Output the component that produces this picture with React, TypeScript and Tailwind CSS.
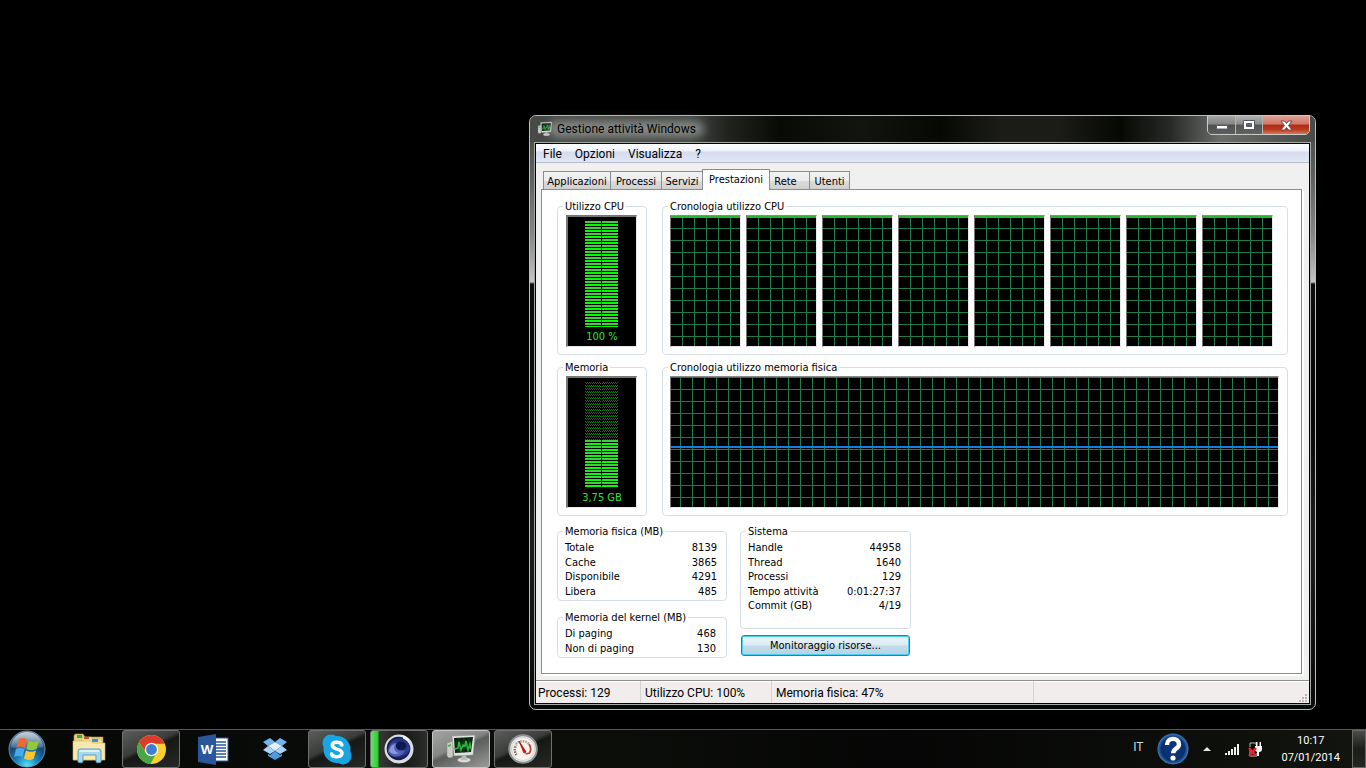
import { ReactNode, useId } from "react";

const dialogFont = "font-['DejaVu_Sans_Condensed','DejaVu_Sans',sans-serif] text-[11px] leading-[13px]";
const shellFont = "font-[Roboto,'Open_Sans',sans-serif] text-xs leading-4";

const tabs = [
  { name: "Applicazioni", width: "w-[68px]" },
  { name: "Processi", width: "w-[52px]" },
  { name: "Servizi", width: "w-[42px]" },
  { name: "Prestazioni", width: "w-[68px]" },
  { name: "Rete", width: "w-[41px]" },
  { name: "Utenti", width: "w-[41px]" },
];

const physicalMemory = [
  ["Totale", "8139"],
  ["Cache", "3865"],
  ["Disponibile", "4291"],
  ["Libera", "485"],
];

const kernelMemory = [
  ["Di paging", "468"],
  ["Non di paging", "130"],
];

const system = [
  ["Handle", "44958"],
  ["Thread", "1640"],
  ["Processi", "129"],
  ["Tempo attività", "0:01:27:37"],
  ["Commit (GB)", "4/19"],
];

function Group({ title, className = "", children }: { title: string; className?: string; children: ReactNode }) {
  return (
    <fieldset className={`min-w-0 rounded-[4px] border border-[#d5dfe5] pl-[7px] ${className}`}>
      <legend className="-ml-[2px] px-[2px] leading-[13px]">{title}</legend>
      {children}
    </fieldset>
  );
}

function Stats({ rows }: { rows: string[][] }) {
  return (
    <table className="w-full">
      <tbody>
        {rows.map(([label, value]) => (
          <tr key={label} className="odd:h-[15px] even:h-[14px]">
            <th scope="row" className="p-0 text-left font-normal">{label}</th>
            <td className="p-0 text-right">{value}</td>
          </tr>
        ))}
      </tbody>
    </table>
  );
}

function Meter({ used, label }: { used: number; label: string }) {
  const id = useId();
  const top = 106 - used;
  return (
    <div className="flex h-[132px] w-[71px] flex-col items-center border-t-2 border-r border-b border-l-2 border-t-[#777] border-r-[#e8e8e8] border-b-[#e8e8e8] border-l-[#777] bg-black pt-1 text-[#2fe02f]">
      <svg width="34" height="106" shapeRendering="crispEdges" aria-hidden="true">
        <defs>
          <pattern id={`${id}-on`} width="17" height="6" y={top} patternUnits="userSpaceOnUse">
            <rect width="16" height="2" fill="#43cb43" />
            <rect y="3" width="16" height="2" fill="#05fb05" />
          </pattern>
          <pattern id={`${id}-off`} width="2" height="3" patternUnits="userSpaceOnUse">
            <rect width="1" height="1" fill="#0a7a0a" />
            <rect x="1" y="1" width="1" height="1" fill="#0a7a0a" />
          </pattern>
        </defs>
        <rect width="33" height={top} fill={`url(#${id}-off)`} />
        <rect y={top} width="33" height={used} fill={`url(#${id}-on)`} />
        <rect x="16" width="1" height="106" fill="#000" />
      </svg>
      <span className="mt-[3px]">{label}</span>
    </div>
  );
}

function History({ offset, children }: { offset: number; children: ReactNode }) {
  const id = useId();
  return (
    <div className="h-[132px] min-w-0 flex-1 border border-t-[#8a8a8a] border-r-[#e8e8e8] border-b-[#e8e8e8] border-l-[#777] bg-black">
      <svg className="block h-full w-full" shapeRendering="crispEdges" aria-hidden="true">
        <defs>
          <pattern id={id} x={offset} y="12" width="12" height="12" patternUnits="userSpaceOnUse">
            <path d="M0 0h12v1H1v11H0z" fill="#1f7a4c" />
          </pattern>
        </defs>
        <rect width="100%" height="100%" fill={`url(#${id})`} />
        {children}
      </svg>
    </div>
  );
}

function MonitorIcon({ className }: { className: string }) {
  return (
    <svg viewBox="0 0 32 28" className={className} aria-hidden="true">
      <path d="M2 8l6-2v16l-4 1-2-2z" fill="#c9ccc9" stroke="#8c908c" strokeWidth=".6" />
      <path d="M3 10l3-1v2l-3 1z" fill="#59b43c" />
      <ellipse cx="19" cy="25" rx="6.500" ry="2.500" fill="#d8dad8" />
      <path d="M17 20h4l1 5h-6z" fill="#b9bcb9" />
      <path d="M7 1l23-1-2 20-19 1z" fill="#e2e4e2" stroke="#8f938f" strokeWidth=".6" />
      <path d="M9 3l19-1-2 15-16 1z" fill="#0a2410" />
      <path d="M9 8h18M9 13h17M14 3v15M19 3v15M24 3v14" stroke="#14592a" strokeWidth=".6" />
      <path d="M10 14l3-1 1-6 2 8 2-5 2 1 1-5 2 9 2-6 1 5" fill="none" stroke="#2fb53d" strokeWidth="1.600" />
    </svg>
  );
}

function WindowButtons() {
  return (
    <div className="-mt-px flex h-5 shrink-0 overflow-hidden rounded-b-[5px] border border-[#c9cbc9] bg-[#777]">
      <button aria-label="Riduci a icona" className="flex w-7 items-center justify-center border-r border-[#b5b5b5] bg-[linear-gradient(#a3a3a3,#858585_45%,#4f5151_50%,#5c5e5e)]">
        <svg width="12" height="6" className="mt-1">
          <rect x=".5" y="1.500" width="11" height="3.500" rx=".5" fill="#fff" stroke="#555b66" />
        </svg>
      </button>
      <button aria-label="Ingrandisci" className="flex w-[27px] items-center justify-center border-r border-[#b5b5b5] bg-[linear-gradient(#b0b0b0,#8c8c8c_45%,#525454_50%,#626464)]">
        <svg width="12" height="10">
          <path d="M.5.500h11v9H.500zM3.500 3.500v3h5v-3z" fill="#fff" fillRule="evenodd" stroke="#555b66" />
        </svg>
      </button>
      <button aria-label="Chiudi" className="flex w-[46px] items-center justify-center bg-[linear-gradient(#dfa195,#cf7768_45%,#b32a14_50%,#b83a20_75%,#d9775a)]">
        <svg width="13" height="11">
          <path d="M1 1h3.500l2 2.500 2-2.500H12L8.500 5.500 12 10H8.500l-2-2.500-2 2.500H1l3.500-4.500z" fill="#fff" stroke="#5a4a55" strokeWidth=".9" />
        </svg>
      </button>
    </div>
  );
}

function TaskManager() {
  return (
    <section
      aria-label="Gestione attività Windows"
      className="absolute top-[115px] right-[50px] left-[529px] rounded-[7px] border border-[#b9bdb9] bg-[linear-gradient(#454845,#5c605c_60px,#858885_120px,#c4c4c4_166px,#0c0e0c_168px,#060806_300px,#1c1e1c_420px,#080a08)] px-1 pb-1"
    >
      <div className="-mx-1 flex h-[26px] justify-between rounded-t-[6px] bg-[linear-gradient(90deg,#474a47,#3e413e_160px,#20221e_200px,#080a06_250px,#121410_330px,#060804_410px,#1b1c18_470px,#1b1c18_530px,#060804_590px,#272926_640px,#6a6c6a_690px,#484b48)] pr-[5px] pl-[7px]">
        <div className="flex items-center">
          <MonitorIcon className="h-4 w-4" />
          <h1 className={`${shellFont} relative ml-1 text-black`}>
            <span className="absolute -inset-x-2 inset-y-0 rounded-full bg-[#999c99]/80 blur-[5px]" />
            <span className="relative">Gestione attività Windows</span>
          </h1>
        </div>
        <WindowButtons />
      </div>

      <div className="border border-[#a4a8a4]">
        <div className="border border-black bg-[#f0f0f0]">
          <nav className={`${shellFont} flex h-[19px] items-center gap-[13px] border-b border-[#b6bccc] bg-[linear-gradient(#fff,#eef1f9_7px,#d5dcee_8px,#e2e7f6)] pt-px pl-[7px] text-black`}>
            <button>File</button>
            <button>Opzioni</button>
            <button>Visualizza</button>
            <button>?</button>
          </nav>

          <div className={`${dialogFont} px-[5px] pt-[6px] pb-[6px] text-black`}>
            <div role="tablist" className="relative flex h-5 items-end pl-[2px]">
              {tabs.map((tab) =>
                tab.name === "Prestazioni" ? (
                  <button key={tab.name} role="tab" aria-selected="true" className={`${tab.width} relative -mb-px -ml-px h-[21px] border border-b-0 border-[#898c95] bg-white pb-[2px]`}>
                    {tab.name}
                  </button>
                ) : (
                  <button key={tab.name} role="tab" aria-selected="false" className={`${tab.width} -ml-px h-[18px] border border-b-0 border-[#898c95] bg-[linear-gradient(#f3f3f3,#ebebeb_50%,#dcdcdc_52%,#d0d0d0)] pt-[2px] first:ml-0 ${tab.name === "Rete" ? "pr-2" : ""}`}>
                    {tab.name}
                  </button>
                )
              )}
            </div>

            <div className="mr-[2px] border border-[#898c95] bg-white px-[15px] pt-[10px] pb-[15px] shadow-[2px_2px_0_#fff]">
              <div className="mr-[-2px] flex gap-[15px]">
                <Group title="Utilizzo CPU" className="w-[90px] shrink-0 pt-[2px] pb-[7px]">
                  <div className="ml-px"><Meter used={106} label="100 %" /></div>
                </Group>
                <Group title="Cronologia utilizzo CPU" className="flex-1 pt-[2px] pr-[14px] pb-[7px]">
                  <div className="flex gap-[5px]">
                    {[0, 1, 2, 3, 4, 5, 6, 7].map((core) => (
                      <History key={core} offset={11}>
                        <rect width="100%" height="2" fill="#27b52c" />
                      </History>
                    ))}
                  </div>
                </Group>
              </div>

              <div className="mt-[6px] mr-[-2px] flex gap-[15px]">
                <Group title="Memoria" className="w-[90px] shrink-0 pt-[2px] pb-[7px]">
                  <div className="ml-px"><Meter used={48} label="3,75 GB" /></div>
                </Group>
                <Group title="Cronologia utilizzo memoria fisica" className="flex-1 pt-[2px] pr-2 pb-[7px]">
                  <div className="flex">
                    <History offset={9}>
                      <rect y="69" width="100%" height="2" fill="#107fe4" />
                    </History>
                  </div>
                </Group>
              </div>

              <div className="mt-[9px] flex gap-[13px]">
                <div className="flex w-[170px] flex-col gap-[10px]">
                  <Group title="Memoria fisica (MB)" className="pt-[2px] pr-[9px] pb-[2px]">
                    <Stats rows={physicalMemory} />
                  </Group>
                  <Group title="Memoria del kernel (MB)" className="pt-[2px] pr-[10px] pb-[2px]">
                    <Stats rows={kernelMemory} />
                  </Group>
                </div>
                <div className="flex w-[171px] flex-col gap-[6px]">
                  <Group title="Sistema" className="pt-[2px] pr-[9px] pb-[15px]">
                    <Stats rows={system} />
                  </Group>
                  <button className="mx-px h-[21px] rounded-[3px] border border-[#2c7da8] bg-[linear-gradient(#e9f3f9,#dcebf4_48%,#c3dcea_52%,#b5d3e4)] shadow-[inset_0_0_0_1px_#48d1f5]">
                    Monitoraggio risorse...
                  </button>
                </div>
              </div>
            </div>
          </div>

          <footer className={`${shellFont} relative flex h-[23px] items-center border-t border-[#8d8f8d] bg-[#f0edec] text-black shadow-[inset_0_1px_0_#fff]`}>
            <span className="w-[105px] self-stretch border-r border-[#d5d3d2] pt-1 pl-[2px]">Processi: 129</span>
            <span className="w-[131px] self-stretch border-r border-[#d5d3d2] pt-1 pl-1">Utilizzo CPU: 100%</span>
            <span className="w-[262px] self-stretch border-r border-[#d5d3d2] pt-1 pl-1">Memoria fisica: 47%</span>
            <svg width="10" height="10" className="mt-auto mr-px ml-auto" shapeRendering="crispEdges" aria-hidden="true">
              <path d="M7 1h2v2H7zM7 4h2v2H7zM4 4h2v2H4zM7 7h2v2H7zM4 7h2v2H4zM1 7h2v2H1z" fill="#bab7b6" />
            </svg>
          </footer>
        </div>
      </div>
    </section>
  );
}

function StartOrb() {
  return (
    <svg width="38" height="38" viewBox="0 0 38 38" aria-hidden="true">
      <defs>
        <radialGradient id="orb" cx=".5" cy=".95" r=".85">
          <stop offset="0" stopColor="#4fe3ff" />
          <stop offset=".35" stopColor="#1a86bd" />
          <stop offset=".7" stopColor="#174a78" />
          <stop offset="1" stopColor="#41668c" />
        </radialGradient>
        <linearGradient id="orb-shine" x2="0" y2="1">
          <stop offset="0" stopColor="#fff" stopOpacity=".7" />
          <stop offset="1" stopColor="#fff" stopOpacity=".12" />
        </linearGradient>
      </defs>
      <circle cx="19" cy="19" r="18" fill="url(#orb)" stroke="#7fa0bb" strokeWidth=".8" />
      <path d="M3 17a16 15 0 0132 0q-16 5-32 0z" fill="url(#orb-shine)" />
      <path d="M11 9q4-2 8 .5l-2 8.500q-4-2.500-8.500-.5z" fill="#ef6a2c" />
      <path d="M20.500 10.500q5 3 10.500 0l-2.500 8.500q-5 2.500-10 0z" fill="#93c83e" />
      <path d="M8 19q4-2 8.500.3l-2 8.200q-4-2.500-8.500-.5z" fill="#4aa7e8" />
      <path d="M18 20.500q5 2.500 10 0l-2.300 8.300q-5 2.500-9.700-.3z" fill="#fdc62f" />
    </svg>
  );
}

function ExplorerIcon() {
  return (
    <svg width="34" height="32" viewBox="0 0 34 32" aria-hidden="true">
      <path d="M2 3q0-2 2-2h7l2 3h18v23H2z" fill="#e9cf7f" stroke="#b49144" strokeWidth=".6" />
      <path d="M5 2h5v3H5z" fill="#34a846" />
      <path d="M10 6V4h9l2 2h9v20H10z" fill="#f3df9a" stroke="#c4a555" strokeWidth=".5" />
      <path d="M12 4h5v2h-5z" fill="#d94b31" />
      <path d="M20 6h6v3h-6z" fill="#3992d1" />
      <path d="M1 8h18l2 2h12v17H1z" fill="#f8e9ae" stroke="#cfae5e" strokeWidth=".6" />
      <path d="M6 18q0-2 2-2h19q2 0 2 2v11q-5 2-5-1v-6H11v6q0 3-5 1z" fill="#a9d8ee" stroke="#5aa1c9" />
      <path d="M7 18h20" stroke="#ecf9ff" strokeWidth="1.500" />
    </svg>
  );
}

function ChromeIcon() {
  return (
    <svg width="29" height="29" viewBox="0 0 28 28" aria-hidden="true">
      <circle cx="14" cy="14" r="14" fill="#fbd02f" />
      <path d="M1.900 7A14 14 0 0126.100 7L27 8.500H14L8 16z" fill="#dc3a2c" />
      <path d="M1.900 7A14 14 0 0013 28l6-11-5 3-6-4z" fill="#48a548" />
      <circle cx="14" cy="14" r="6.500" fill="#f3f5f3" />
      <circle cx="14" cy="14" r="5.200" fill="#3f7fd0" />
    </svg>
  );
}

function WordIcon() {
  return (
    <svg width="31" height="31" viewBox="0 0 31 31" aria-hidden="true">
      <rect x="16" y="4" width="14" height="23" fill="#fff" stroke="#2b579a" />
      <path d="M18 8h10M18 11h10M18 14h10M18 17h10M18 20h10M18 23h10" stroke="#2b579a" strokeWidth="1.300" />
      <path d="M0 3l18-3v31L0 28z" fill="#2a569c" />
      <text x="9" y="20" textAnchor="middle" fontSize="13" fontWeight="700" fill="#fff" fontFamily="Open Sans, sans-serif">W</text>
    </svg>
  );
}

function DropboxIcon() {
  return (
    <svg width="24" height="22" viewBox="0 0 24 22" aria-hidden="true">
      <path d="M7 0l5 4-7 4-5-4zM17 0l-5 4 7 4 5-4z" fill="#6fb5ee" />
      <path d="M5 8l7-4 7 4-7 5z" fill="#e0f1fd" />
      <path d="M0 12l5-4 7 5-5 3zM24 12l-5-4-7 5 5 3z" fill="#a8d5f7" />
      <path d="M5 16l2 1 5-4 5 4 2-1v2l-7 4-7-4z" fill="#4c9be0" />
    </svg>
  );
}

function SkypeIcon() {
  return (
    <svg width="30" height="31" viewBox="0 0 30 31" aria-hidden="true">
      <circle cx="9" cy="9" r="8.500" fill="#18a5e2" />
      <circle cx="21" cy="22" r="8.500" fill="#18a5e2" />
      <circle cx="15" cy="15.500" r="13.500" fill="#18a5e2" />
      <path d="M19.800 11c-1-3.800-9.500-3.600-9.500.3 0 4.800 9.700 2.800 9.700 8 0 4.500-9.500 4.500-10.500.7" fill="none" stroke="#fff" strokeWidth="3.600" strokeLinecap="round" />
    </svg>
  );
}

function CinemaIcon() {
  return (
    <svg width="30" height="30" viewBox="0 0 30 30" aria-hidden="true">
      <defs>
        <radialGradient id="lens" cx=".6" cy=".35" r=".8">
          <stop offset="0" stopColor="#101b5c" />
          <stop offset=".5" stopColor="#2b3f9b" />
          <stop offset="1" stopColor="#0b0e2b" />
        </radialGradient>
      </defs>
      <circle cx="15" cy="15" r="14.500" fill="#d9dce4" />
      <circle cx="14.500" cy="14.500" r="11.800" fill="#181d48" />
      <path d="M3 17C4 8 12 2 21 5c5 4 6 10 3 14-4 7-18 8-21-2z" fill="url(#lens)" />
      <path d="M4 18c0-5 4-10 9-9-3 5 1 9 8 7-2 8-14 9-17 2z" fill="#5b6cc4" opacity=".8" />
      <path d="M5 17c1-4 3-6 6-7-2 5 0 8 4 9-4 2-8 1-10-2z" fill="#b3bdf0" opacity=".6" />
      <ellipse cx="17" cy="12" rx="5" ry="4" fill="#10174a" />
      <path d="M19 1.500q4 1 6 4l1 6q-2-5-7-7z" fill="#f4f5f9" />
    </svg>
  );
}

function GaugeIcon() {
  return (
    <svg width="30" height="30" viewBox="0 0 30 30" aria-hidden="true">
      <circle cx="15" cy="15" r="13.800" fill="#eeebe6" stroke="#8e9296" strokeWidth="2" />
      <circle cx="15" cy="15" r="11.500" fill="#f7f4ee" stroke="#d4d2ce" />
      <path d="M8.500 21a9 9 0 01-.5-10" fill="none" stroke="#77736e" strokeWidth="2.500" strokeDasharray="1.500 1" />
      <path d="M8 10a9 9 0 0113 0" fill="none" stroke="#a39d96" strokeWidth="2.500" strokeDasharray="1.500 1" />
      <path d="M21 10q3 5 .5 9l-4 1" fill="none" stroke="#c53c35" strokeWidth="1.800" />
      <path d="M11 7l7 11-2 1z" fill="#b91b16" stroke="#b91b16" />
    </svg>
  );
}

const idle = "border-transparent";
const running = "border-[#6f716f] bg-[linear-gradient(155deg,#5b5d5b,#3b3d3b_42%,#161816_50%,#262826)]";
const active = "border-[#c4c5c4] bg-[linear-gradient(155deg,#a3a4a3,#858785_42%,#5b5d5b_50%,#9a9b9a)]";
const busy = "border-[#6f716f] bg-[linear-gradient(90deg,#63e463,#35c835_7px,#1d4a1d_8px,#343634_10px,#181a18_60%,#2b2d2b)]";

const apps = [
  { name: "Esplora risorse", look: idle, icon: <ExplorerIcon /> },
  { name: "Google Chrome", look: running, icon: <ChromeIcon /> },
  { name: "Word", look: idle, icon: <WordIcon /> },
  { name: "Dropbox", look: idle, icon: <DropboxIcon /> },
  { name: "Skype", look: running, icon: <SkypeIcon /> },
  { name: "Cinema 4D", look: busy, icon: <CinemaIcon /> },
  { name: "Gestione attività", look: active, icon: <MonitorIcon className="h-7 w-8" /> },
  { name: "Prestazioni", look: running, icon: <GaugeIcon /> },
];

function Taskbar() {
  return (
    <footer className={`${shellFont} flex h-[39px] items-stretch justify-between border-t border-[#565856] bg-[linear-gradient(90deg,#060806,#0c0e0a_600px,#050605_900px,#12140f)] text-white`}>
      <div className="flex">
        <button aria-label="Start" className="w-[60px] pl-2"><StartOrb /></button>
        <div className="flex gap-1">
          {apps.map((app) => (
            <button key={app.name} aria-label={app.name} className={`flex w-[58px] items-center justify-center rounded-[3px] border ${app.look}`}>
              {app.icon}
            </button>
          ))}
        </div>
      </div>

      <div className="flex items-center">
        <span className="mr-[14px] mb-1 text-[#d8d8d8]">IT</span>
        <button aria-label="Guida">
          <svg width="32" height="32" viewBox="0 0 32 32">
            <defs>
              <radialGradient id="help">
                <stop offset="0" stopColor="#0b3b80" />
                <stop offset=".75" stopColor="#0b2f6b" />
                <stop offset="1" stopColor="#3a7cc0" />
              </radialGradient>
            </defs>
            <circle cx="16" cy="16" r="15.500" fill="url(#help)" />
            <path d="M10 12c0-8 12-8 12-.8 0 4.500-5.800 4.300-5.800 9" fill="none" stroke="#fff" strokeWidth="4.400" />
            <circle cx="16" cy="25" r="2.600" fill="#fff" />
          </svg>
        </button>
        <button aria-label="Mostra icone nascoste" className="mr-[14px] ml-[14px]">
          <svg width="8" height="4"><path d="M4 0l4 4H0z" fill="#e6e6e6" /></svg>
        </button>
        <button aria-label="Rete" className="mr-2">
          <svg width="15" height="11" shapeRendering="crispEdges">
            <path d="M0 9h2v2H0zM3 7h2v4H3zM6 5h2v6H6zM9 3h2v8H9zM12 0h2v11h-2z" fill="#f0f0f0" />
          </svg>
        </button>
        <button aria-label="Alimentazione" className="mr-[18px]">
          <svg width="15" height="15" viewBox="0 0 15 15">
            <path d="M2 5V1h6v2M2 6v8h7v-3" fill="none" stroke="#bdbdbd" />
            <path d="M7 4h7v3q0 3-3 3v4H9v-4Q7 9 7 7zM8 0h1.500v4H8zM11.500 0H13v4h-1.500z" fill="#fff" />
            <path d="M1 6l7 8M8 6l-7 8" stroke="#f0202a" strokeWidth="2.400" />
          </svg>
        </button>
        <time dateTime="2014-01-07T10:17" className="mr-3 flex flex-col items-center gap-px text-[11px]">
          <span>10:17</span>
          <span>07/01/2014</span>
        </time>
        <button aria-label="Mostra desktop" className="w-[14px] self-stretch border border-[#666866] bg-linear-to-b from-[#4b4d4b] via-[#1b1d1b] to-[#242624]" />
      </div>
    </footer>
  );
}

export default function App() {
  return (
    <div className="flex min-h-screen flex-col bg-black">
      <main className="relative min-h-[715px] flex-1">
        <TaskManager />
      </main>
      <Taskbar />
    </div>
  );
}
